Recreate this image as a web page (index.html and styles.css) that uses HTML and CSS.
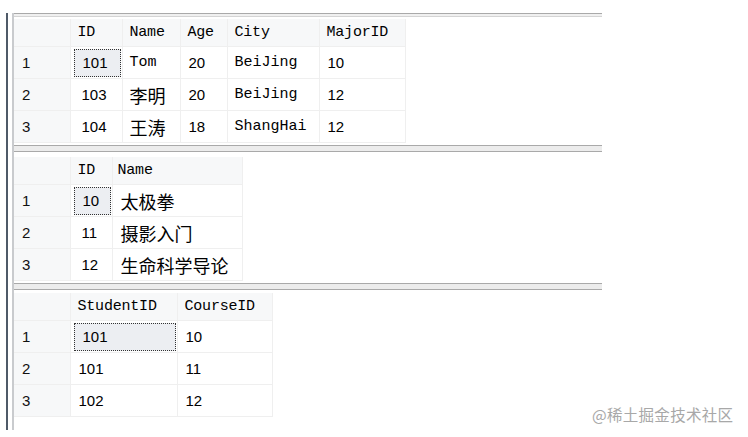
FILE: index.html
```html
<!DOCTYPE html>
<html>
<head>
<meta charset="utf-8">
<link rel="stylesheet" href="styles.css">
</head>
<body>
<div class="frame">
  <div class="inner">
    <div class="band-top"></div>
    <section class="pane p1">
      <table class="grid">
        <colgroup><col style="width:56px"><col style="width:52px"><col style="width:58px"><col style="width:47px"><col style="width:92px"><col style="width:86px"></colgroup>
        <tr class="head"><th class="rh"></th><th>ID</th><th>Name</th><th>Age</th><th>City</th><th>MajorID</th></tr>
        <tr><td class="rh">1</td><td class="n sel"><span class="selbox">101</span></td><td>Tom</td><td class="n">20</td><td>BeiJing</td><td class="n">10</td></tr>
        <tr><td class="rh">2</td><td class="n c">103</td><td class="cjk">李明</td><td class="n">20</td><td>BeiJing</td><td class="n">12</td></tr>
        <tr><td class="rh">3</td><td class="n c">104</td><td class="cjk">王涛</td><td class="n">18</td><td>ShangHai</td><td class="n">12</td></tr>
      </table>
    </section>
    <div class="band"></div>
    <section class="pane p2">
      <table class="grid">
        <colgroup><col style="width:56px"><col style="width:42px"><col style="width:130px"></colgroup>
        <tr class="head"><th class="rh"></th><th>ID</th><th class="tight">Name</th></tr>
        <tr><td class="rh">1</td><td class="n sel"><span class="selbox">10</span></td><td class="cjk tight">太极拳</td></tr>
        <tr><td class="rh">2</td><td class="n c">11</td><td class="cjk tight">摄影入门</td></tr>
        <tr><td class="rh">3</td><td class="n c">12</td><td class="cjk tight">生命科学导论</td></tr>
      </table>
    </section>
    <div class="band"></div>
    <section class="pane p3">
      <table class="grid">
        <colgroup><col style="width:56px"><col style="width:107px"><col style="width:95px"></colgroup>
        <tr class="head"><th class="rh"></th><th>StudentID</th><th>CourseID</th></tr>
        <tr><td class="rh">1</td><td class="n sel"><span class="selbox">101</span></td><td class="n">10</td></tr>
        <tr><td class="rh">2</td><td class="n">101</td><td class="n">11</td></tr>
        <tr><td class="rh">3</td><td class="n">102</td><td class="n">12</td></tr>
      </table>
    </section>
  </div>
</div>
<div class="watermark">@稀土掘金技术社区</div>
</body>
</html>
```

FILE: styles.css
```css
html, body {
  margin: 0;
  padding: 0;
  background: #ffffff;
  width: 748px;
  height: 437px;
  overflow: hidden;
  position: relative;
}
.frame {
  margin: 13px 0 0 6px;
  border-left: 2px solid #4f5a68;
  height: 417px;
  display: flex;
}
.inner {
  margin-left: 4px;
  border-left: 2px solid #c9cbce;
  width: 588px;
  display: flex;
  flex-direction: column;
}
.band-top {
  height: 2px;
  border-top: 1px solid #a9a9a9;
  border-bottom: 1px solid #d4d4d4;
  background: #f0f0f0;
}
.band {
  height: 5px;
  border-top: 1px solid #a9a9a9;
  border-bottom: 1px solid #a9a9a9;
  background: #ececec;
}
.pane { background: #fff; box-sizing: border-box; }
.p1 { height: 128px; padding-top: 2px; }
.p2 { height: 131px; padding-top: 5px; }
.p3 { flex: 1; padding-top: 3px; }
.grid {
  border-collapse: collapse;
  table-layout: fixed;
  font-family: "Liberation Mono", "DejaVu Sans Mono", monospace;
  font-size: 15px;
  color: #000;
}
.grid th, .grid td {
  border-right: 1px solid #efefef;
  border-bottom: 1px solid #efefef;
  padding: 0 0 0 7px;
  text-align: left;
  white-space: nowrap;
  overflow: hidden;
}
.grid th {
  height: 27px;
  font-weight: normal;
  background: #f7f8f9;
  letter-spacing: -0.2px;
}
.grid td { height: 31px; }
.grid td.rh, .grid th.rh {
  background: #f7f8f9;
  font-family: "Liberation Sans", Arial, sans-serif;
  font-size: 15px;
  padding-left: 8px;
  color: #111;
}
.grid td.n {
  font-family: "Liberation Sans", Arial, sans-serif;
  font-size: 15px;
  padding-left: 8px;
}
.grid td.c { padding-left: 11px; }
.grid td.cjk {
  font-family: "Noto Sans CJK SC", "Noto Sans", sans-serif;
  font-size: 18px;
}
.grid .tight { padding-left: 5px; }
.grid td.cjk.tight { padding-left: 8px; }
.grid td.sel {
  padding: 0 1px 0 3px;
}
.selbox {
  display: flex;
  align-items: center;
  height: 28px;
  padding-left: 8px;
  background: #eceef2;
  border: 1px dotted #333;
  box-sizing: border-box;
}
.watermark {
  position: absolute;
  left: 592px;
  top: 403px;
  font-family: "Noto Sans CJK SC", sans-serif;
  font-size: 15.5px;
  color: #a8a8a8;
  letter-spacing: 0.3px;
}
```
